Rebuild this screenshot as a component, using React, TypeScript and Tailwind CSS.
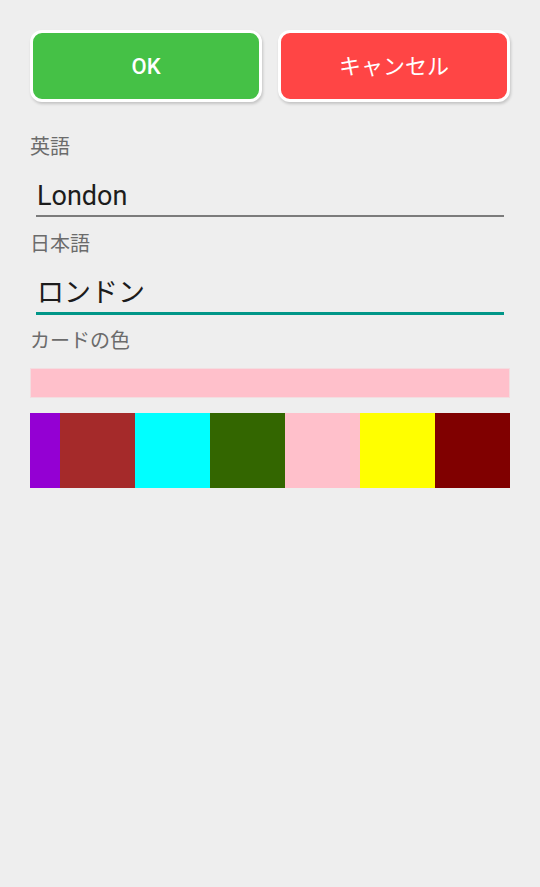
import React from "react";

const font = { fontFamily: "Roboto, 'Noto Sans CJK JP', sans-serif" };

function Field({ label, value, focused, first }: { label: string; value: string; focused?: boolean; first?: boolean }) {
  return (
    <div className="flex flex-col">
      <div className={`text-[20px] leading-[24px] text-[#6b6b6b] ${first ? "mt-[14px]" : "mt-[15px]"}`}>{label}</div>
      <div className="px-[6px] pt-[19px]">
        <div className="text-[27px] leading-[36px] text-[#1c1c1c] pl-[1px]">{value}</div>
        {focused ? (
          <div className="mt-[1px] h-[3px] bg-[#009688]" />
        ) : (
          <div className="mt-[1px] h-[2px] bg-[#7b7b7b]" />
        )}
      </div>
    </div>
  );
}

export default function App() {
  const swatches = ["#9400d3", "#a52a2a", "#00ffff", "#336600", "#ffc0cb", "#ffff00", "#800000", "#000080"];
  return (
    <div className="w-[540px] min-h-[887px] bg-[#eeeeee] px-[30px] pt-[30px]" style={font}>
      <div className="flex gap-4">
        <button className="flex-1 h-[72px] rounded-[12px] border-[3px] border-white bg-[#45c146] text-white text-[22px] font-medium shadow-[1px_2px_3px_rgba(0,0,0,0.18)]">
          OK
        </button>
        <button className="flex-1 h-[72px] rounded-[12px] border-[3px] border-white bg-[#ff4545] text-white text-[22px] shadow-[1px_2px_3px_rgba(0,0,0,0.18)]">
          キャンセル
        </button>
      </div>
      <div className="mt-[19px]">
        <Field label="英語" value="London" first />
        <Field label="日本語" value="ロンドン" focused />
        <div className="text-[20px] leading-[24px] text-[#6b6b6b] mt-[14px]">カードの色</div>
      </div>
      <div className="mt-[15px] h-[30px] bg-[#ffc0cb] border border-[#f3dde0]" />
      <div className="mt-[15px] overflow-hidden">
        <div className="flex -ml-[45px]">
          {swatches.map((c) => (
            <div key={c} className="w-[75px] h-[75px] shrink-0" style={{ backgroundColor: c }} />
          ))}
        </div>
      </div>
    </div>
  );
}
